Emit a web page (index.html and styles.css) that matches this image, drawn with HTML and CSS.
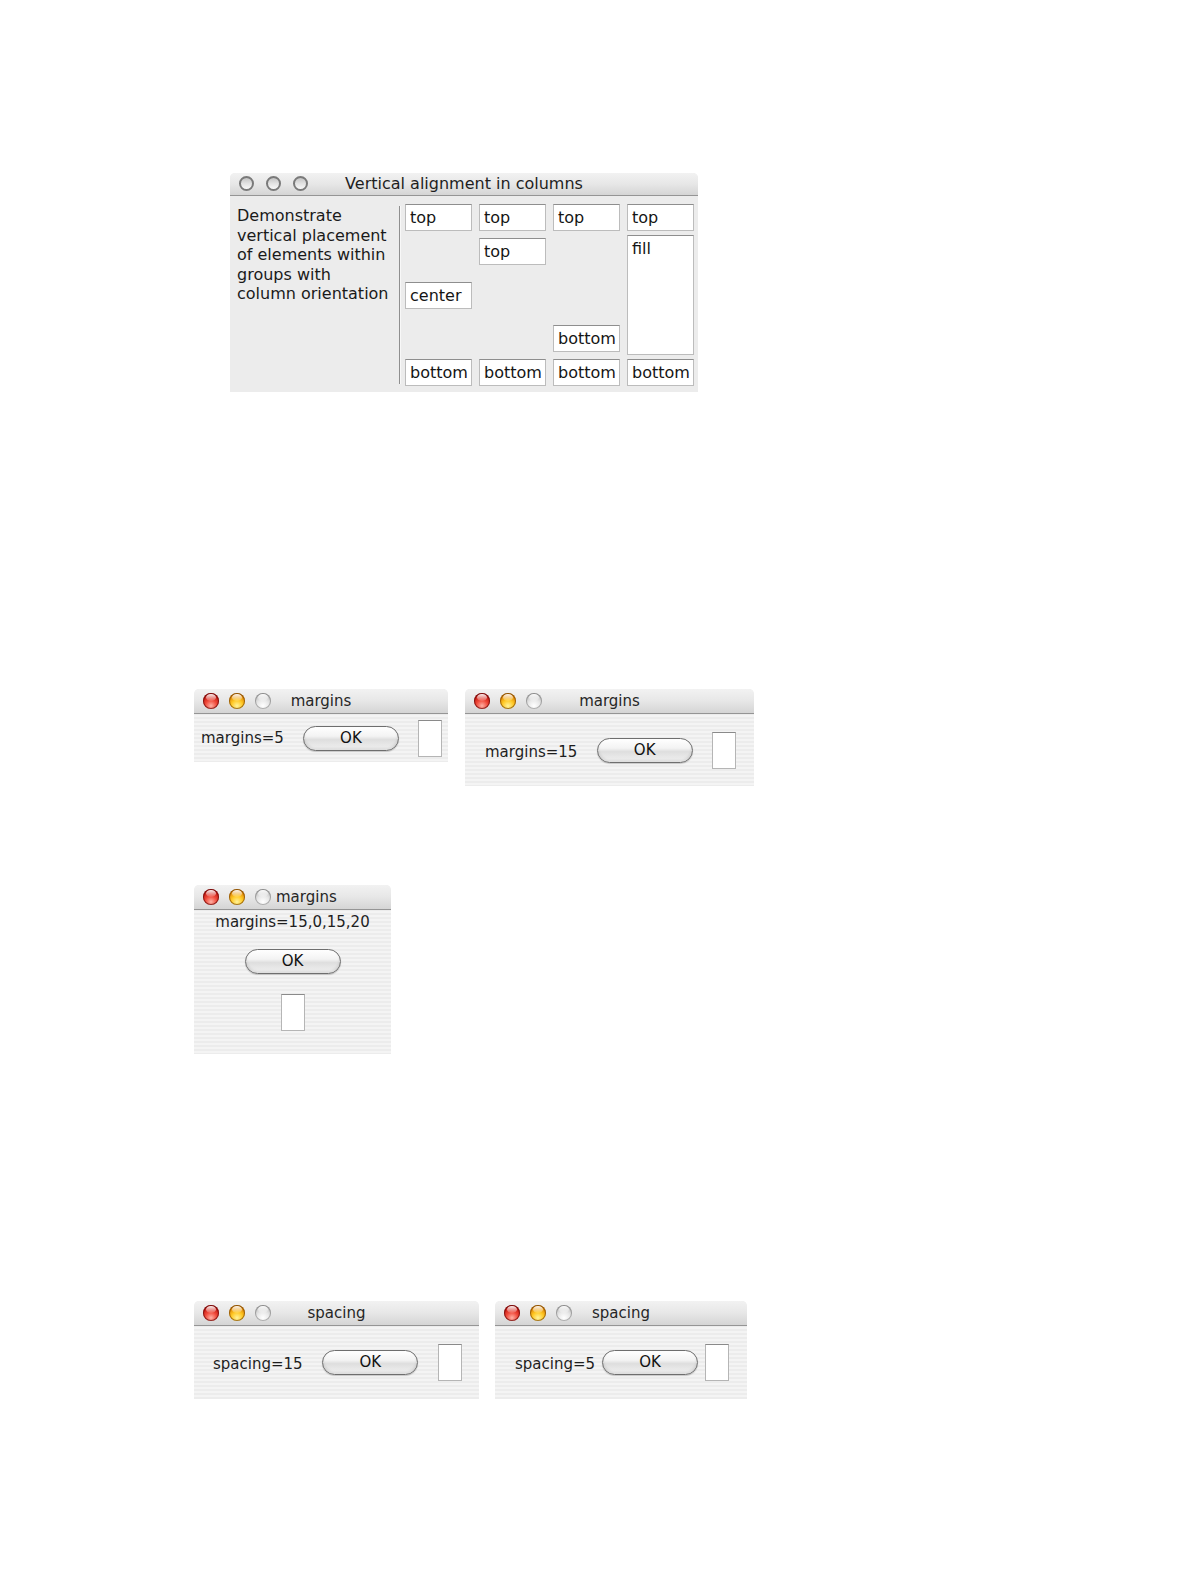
FILE: index.html
```html
<!DOCTYPE html>
<html lang="en">
<head>
<meta charset="utf-8">
<title>Aqua layout examples</title>
<link rel="stylesheet" href="styles.css">
</head>
<body>
<div class="page">

  <section class="fig fig-cols">
    <div class="win win-cols">
      <div class="titlebar tb-lg">
        <div class="lights lights-lg">
          <span class="light off"></span><span class="light off"></span><span class="light off"></span>
        </div>
        <div class="title">Vertical alignment in columns</div>
        <div></div>
      </div>
      <div class="cols-body">
        <p class="desc">Demonstrate<br>vertical placement<br>of elements within<br>groups with<br>column orientation</p>
        <div class="sep"></div>
        <div class="cols">
          <div class="col col-center">
            <div class="field">top</div>
            <div class="field">center</div>
            <div class="field">bottom</div>
          </div>
          <div class="col">
            <div class="field">top</div>
            <div class="field">top</div>
            <div class="field push">bottom</div>
          </div>
          <div class="col">
            <div class="field">top</div>
            <div class="field push">bottom</div>
            <div class="field">bottom</div>
          </div>
          <div class="col col-fill">
            <div class="field">top</div>
            <div class="field fill">fill</div>
            <div class="field">bottom</div>
          </div>
        </div>
      </div>
    </div>
  </section>

  <section class="fig row row-margins">
    <div class="win win-m5">
      <div class="titlebar">
        <div class="lights"><span class="light red"></span><span class="light yellow"></span><span class="light gray"></span></div>
        <div class="title">margins</div>
        <div></div>
      </div>
      <div class="hbody pad-m5">
        <span class="label">margins=5</span>
        <span class="btn">OK</span>
        <span class="box"></span>
      </div>
    </div>
    <div class="win win-m15">
      <div class="titlebar">
        <div class="lights"><span class="light red"></span><span class="light yellow"></span><span class="light gray"></span></div>
        <div class="title">margins</div>
        <div></div>
      </div>
      <div class="hbody pad-m15">
        <span class="label">margins=15</span>
        <span class="btn">OK</span>
        <span class="box"></span>
      </div>
    </div>
  </section>

  <section class="fig fig-mixed">
    <div class="win win-mixed">
      <div class="titlebar">
        <div class="lights"><span class="light red"></span><span class="light yellow"></span><span class="light gray"></span></div>
        <div class="title">margins</div>
        <div></div>
      </div>
      <div class="vbody">
        <span class="label">margins=15,0,15,20</span>
        <span class="btn">OK</span>
        <span class="box"></span>
      </div>
    </div>
  </section>

  <section class="fig row row-spacing">
    <div class="win win-s15">
      <div class="titlebar">
        <div class="lights"><span class="light red"></span><span class="light yellow"></span><span class="light gray"></span></div>
        <div class="title">spacing</div>
        <div></div>
      </div>
      <div class="hbody pad-s15">
        <span class="label">spacing=15</span>
        <span class="btn">OK</span>
        <span class="box"></span>
      </div>
    </div>
    <div class="win win-s5">
      <div class="titlebar">
        <div class="lights"><span class="light red"></span><span class="light yellow"></span><span class="light gray"></span></div>
        <div class="title">spacing</div>
        <div></div>
      </div>
      <div class="hbody pad-s5">
        <span class="label">spacing=5</span>
        <span class="btn">OK</span>
        <span class="box"></span>
      </div>
    </div>
  </section>

</div>
</body>
</html>
```

FILE: styles.css
```css
* { box-sizing: border-box; }

html, body {
  margin: 0;
  padding: 0;
  background: #ffffff;
}

body {
  font-family: "DejaVu Sans", "Liberation Sans", sans-serif;
  color: #1c1c1c;
  font-size: 15px;
}

.page {
  display: flex;
  flex-direction: column;
  align-items: flex-start;
  padding-top: 173px;
}

/* ---------- generic window ---------- */
.win {
  display: flex;
  flex-direction: column;
  background: repeating-linear-gradient(to bottom, #ececec 0, #ececec 2px, #f4f4f4 2px, #f4f4f4 4px);
  border-radius: 5px 5px 0 0;
  overflow: hidden;
}

.titlebar {
  display: grid;
  grid-template-columns: 1fr auto 1fr;
  align-items: center;
  height: 25px;
  background: linear-gradient(to bottom, #f2f2f2 0%, #e7e7e7 50%, #d5d5d5 100%);
  border-bottom: 1px solid #959595;
  flex: none;
}

.title {
  font-size: 15px;
  color: #262626;
  white-space: nowrap;
  line-height: 20px;
  padding-bottom: 1px;
}

.lights {
  display: flex;
  align-items: center;
  gap: 10px;
  padding: 0 5px 1px 9px;
}

.light {
  position: relative;
  width: 16px;
  height: 16px;
  border-radius: 50%;
  flex: none;
}

.light::after {
  content: "";
  position: absolute;
  left: 3px;
  top: 1px;
  width: 10px;
  height: 7px;
  border-radius: 50%;
  background: linear-gradient(to bottom, rgba(255,255,255,0.95), rgba(255,255,255,0.1));
}

.light.red {
  background: radial-gradient(circle at 50% 80%, #ffb0a4 0%, #f04a3a 38%, #c41812 70%, #7e0808 100%);
  box-shadow: inset 0 0 0 1px rgba(100, 8, 8, 0.7);
}

.light.yellow {
  background: radial-gradient(circle at 50% 80%, #fff39a 0%, #ffc824 38%, #df8604 70%, #8c5004 100%);
  box-shadow: inset 0 0 0 1px rgba(115, 65, 0, 0.65);
}

.light.gray {
  background: radial-gradient(circle at 50% 80%, #ffffff 0%, #e8e8e8 40%, #c6c6c6 72%, #969696 100%);
  box-shadow: inset 0 0 0 1px rgba(90, 90, 90, 0.45);
}

/* ---------- window 1: vertical alignment in columns ---------- */
.fig-cols { margin-left: 230px; }

.win-cols {
  width: 468px;
  background: #ececec;
}

.tb-lg {
  height: 23px;
}

.tb-lg .title {
  font-size: 16px;
  color: #1e1e1e;
  padding-bottom: 0;
}

.lights-lg {
  gap: 12px;
  padding: 0 8px 2px 9px;
}

.light.off {
  width: 15px;
  height: 15px;
  border: 2px solid #7a7a7a;
  background: linear-gradient(to bottom, #c4c4c4 0%, #e2e2e2 50%, #f8f8f8 100%);
}

.light.off::after { display: none; }

.cols-body {
  display: flex;
  padding: 8px 4px 6px 7px;
}

.desc {
  margin: 2px 0 0 0;
  width: 162px;
  font-size: 16px;
  line-height: 19.5px;
  color: #1a1a1a;
}

.sep {
  width: 1px;
  margin: 2px 5px 2px 0;
  background: #8f8f8f;
  box-shadow: 1px 0 0 #f8f8f8;
}

.cols {
  display: grid;
  grid-template-columns: repeat(4, 67px);
  gap: 7px;
  height: 182px;
}

.col {
  display: flex;
  flex-direction: column;
  gap: 7px;
}

.col-center { justify-content: space-between; }
.col-fill { gap: 4px; }

.push { margin-top: auto; }

.field {
  height: 27px;
  flex: none;
  background: #ffffff;
  border: 1px solid #bcbcbc;
  border-top-color: #8e8e8e;
  font-size: 16px;
  line-height: 24px;
  padding: 1px 0 0 4px;
  color: #151515;
  white-space: nowrap;
  overflow: hidden;
}

.field.fill {
  flex: 1;
  height: auto;
}

/* ---------- common controls ---------- */
.label {
  font-size: 15px;
  line-height: 18px;
  color: #1e1e1e;
  white-space: nowrap;
}

.btn {
  display: block;
  width: 96px;
  height: 25px;
  border-radius: 13px;
  border: 1px solid #6e6e6e;
  background: linear-gradient(to bottom, #ffffff 0%, #f3f3f3 40%, #dedede 55%, #e9e9e9 80%, #fbfbfb 100%);
  box-shadow: inset 0 -2px 3px rgba(0, 0, 0, 0.12), 0 1px 1px rgba(0, 0, 0, 0.18);
  text-align: center;
  font-size: 15px;
  line-height: 22px;
  color: #111;
  flex: none;
}

.box {
  display: block;
  width: 24px;
  height: 37px;
  background: #ffffff;
  border: 1px solid #b5b5b5;
  border-top-color: #8a8a8a;
  flex: none;
}

.hbody {
  display: flex;
  align-items: center;
  justify-content: space-between;
}

/* ---------- margins row ---------- */
.row {
  display: flex;
  align-items: flex-start;
}

.row-margins {
  margin-top: 297px;
  margin-left: 194px;
  gap: 17px;
}

.win-m5 { width: 254px; }
.pad-m5 { height: 48px; padding: 0 6px 0 7px; }

.win-m15 { width: 289px; }
.pad-m15 { height: 72px; padding: 0 18px 0 20px; }
.pad-m15 .label { margin-top: 3px; }

/* ---------- mixed margins ---------- */
.fig-mixed {
  margin-top: 99px;
  margin-left: 194px;
}

.win-mixed { width: 197px; }

.vbody {
  display: flex;
  flex-direction: column;
  align-items: center;
  height: 144px;
  padding-top: 3px;
}

.vbody .btn { margin-top: 18px; }
.vbody .box { margin-top: 20px; }

/* ---------- spacing row ---------- */
.row-spacing {
  margin-top: 247px;
  margin-left: 194px;
  gap: 16px;
}

.win-s15 { width: 285px; }
.pad-s15 { height: 73px; padding: 0 17px 0 19px; }
.pad-s15 .label { margin-top: 2px; }

.win-s5 { width: 252px; }
.pad-s5 { height: 73px; padding: 0 18px 0 20px; }
.pad-s5 .label { margin-top: 2px; }
```
